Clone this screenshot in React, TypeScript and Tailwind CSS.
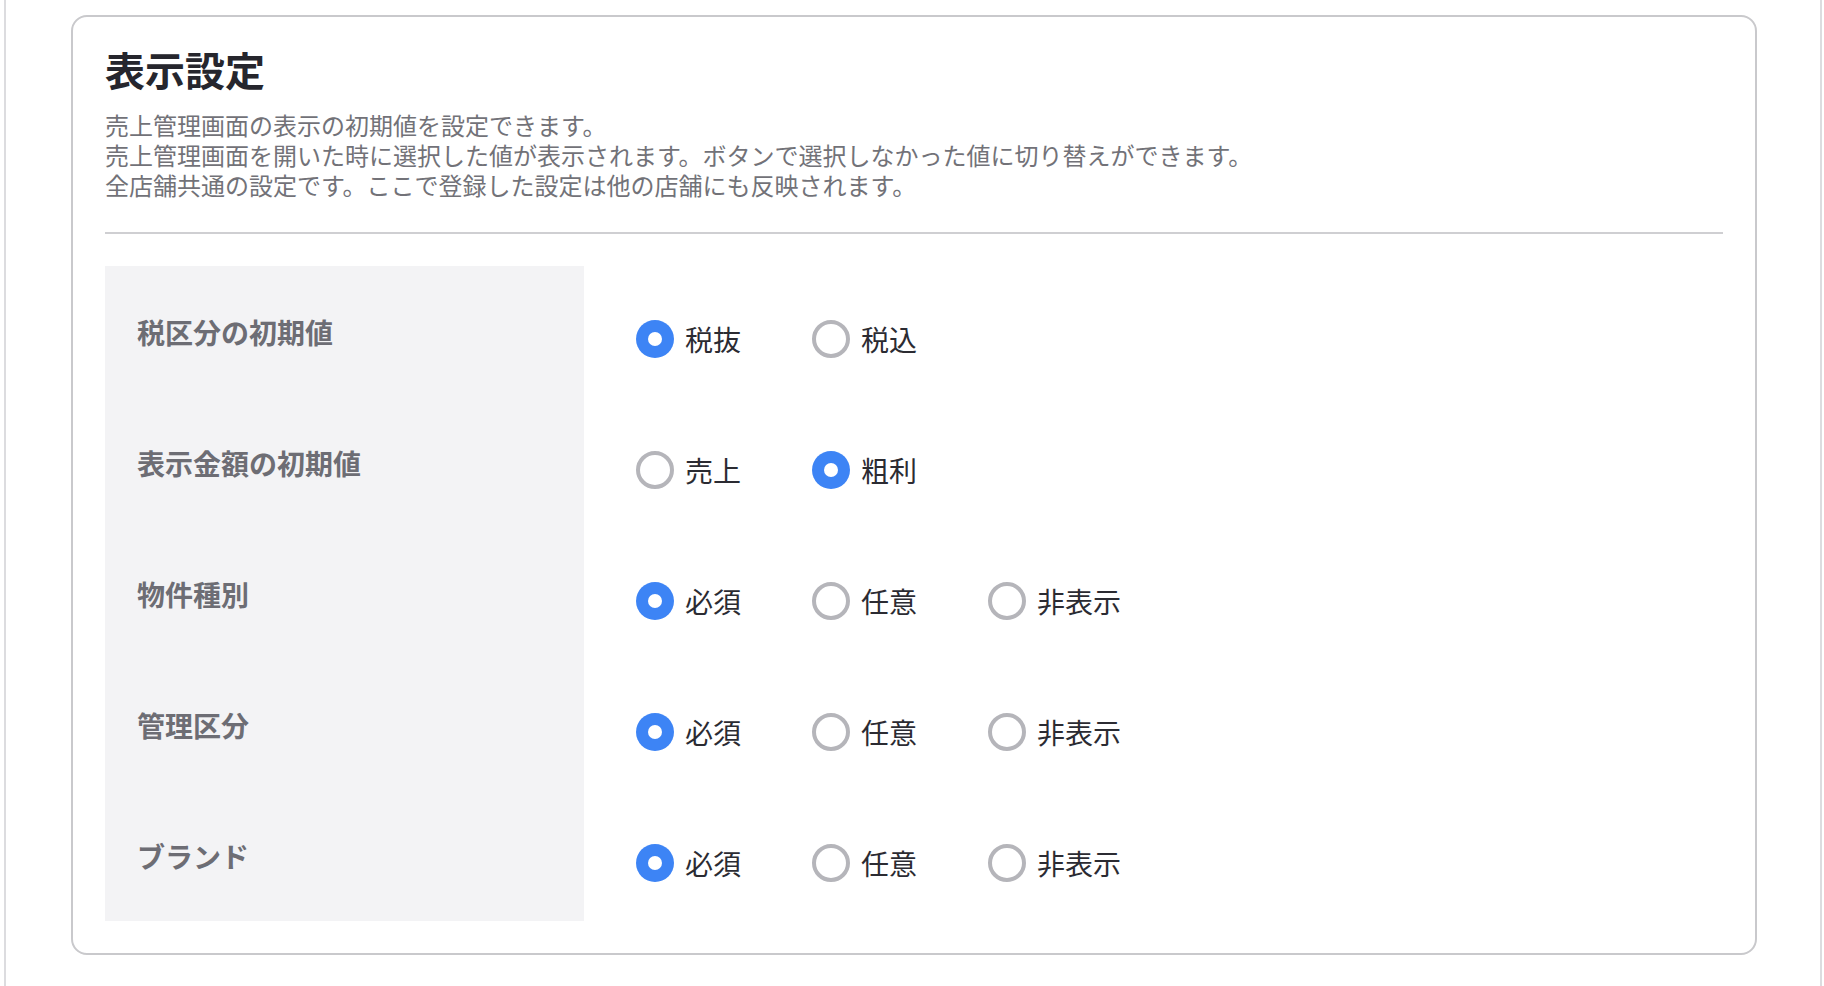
import React from "react";

type Row = {
  label: string;
  options: string[];
  selected: number;
};

const rows: Row[] = [
  { label: "税区分の初期値", options: ["税抜", "税込"], selected: 0 },
  { label: "表示金額の初期値", options: ["売上", "粗利"], selected: 1 },
  { label: "物件種別", options: ["必須", "任意", "非表示"], selected: 0 },
  { label: "管理区分", options: ["必須", "任意", "非表示"], selected: 0 },
  { label: "ブランド", options: ["必須", "任意", "非表示"], selected: 0 },
];

function Radio({ checked, label }: { checked: boolean; label: string }) {
  return (
    <label className="flex items-center gap-[11px] cursor-pointer">
      {checked ? (
        <span className="flex h-[38px] w-[38px] items-center justify-center rounded-full bg-[#3d84f5]">
          <span className="h-[14px] w-[14px] rounded-full bg-white" />
        </span>
      ) : (
        <span className="h-[38px] w-[38px] rounded-full border-[4px] border-[#b5b5ba] bg-white" />
      )}
      <span className="text-[28px] leading-none text-[#2b2b32]">{label}</span>
    </label>
  );
}

function SettingRow({ row }: { row: Row }) {
  return (
    <div className="flex h-[131px]">
      <div className="flex w-[479px] shrink-0 items-center bg-[#f3f3f5] pl-8">
        <span className="text-[28px] font-bold text-[#6d6d74]">{row.label}</span>
      </div>
      <div className="flex items-center gap-[71px] pl-[52px] pt-[14px]">
        {row.options.map((o, i) => (
          <Radio key={o} label={o} checked={i === row.selected} />
        ))}
      </div>
    </div>
  );
}

export default function App() {
  return (
    <div
      className="min-h-screen bg-white pl-[4px] pr-[2px]"
      style={{ fontFamily: '"Noto Sans CJK JP", "Noto Sans", sans-serif' }}
    >
      <div className="min-h-screen border-x-2 border-[#dcdcdf] pt-[15px] pb-8">
        <div className="ml-[65px] mr-[63px] rounded-2xl border-2 border-[#c9c9cc] px-8 pt-[28px] pb-8">
          <h1 className="text-[40px] font-bold leading-[48px] text-[#26262d]">表示設定</h1>
          <div className="mt-[17px] text-[24px] leading-[30px] text-[#727278]">
            <p>売上管理画面の表示の初期値を設定できます。</p>
            <p>売上管理画面を開いた時に選択した値が表示されます。ボタンで選択しなかった値に切り替えができます。</p>
            <p>全店舗共通の設定です。ここで登録した設定は他の店舗にも反映されます。</p>
          </div>
          <div className="mt-8 h-[2px] bg-[#cfcfd2]" />
          <div className="mt-8">
            {rows.map((r) => (
              <SettingRow key={r.label} row={r} />
            ))}
          </div>
        </div>
      </div>
    </div>
  );
}
